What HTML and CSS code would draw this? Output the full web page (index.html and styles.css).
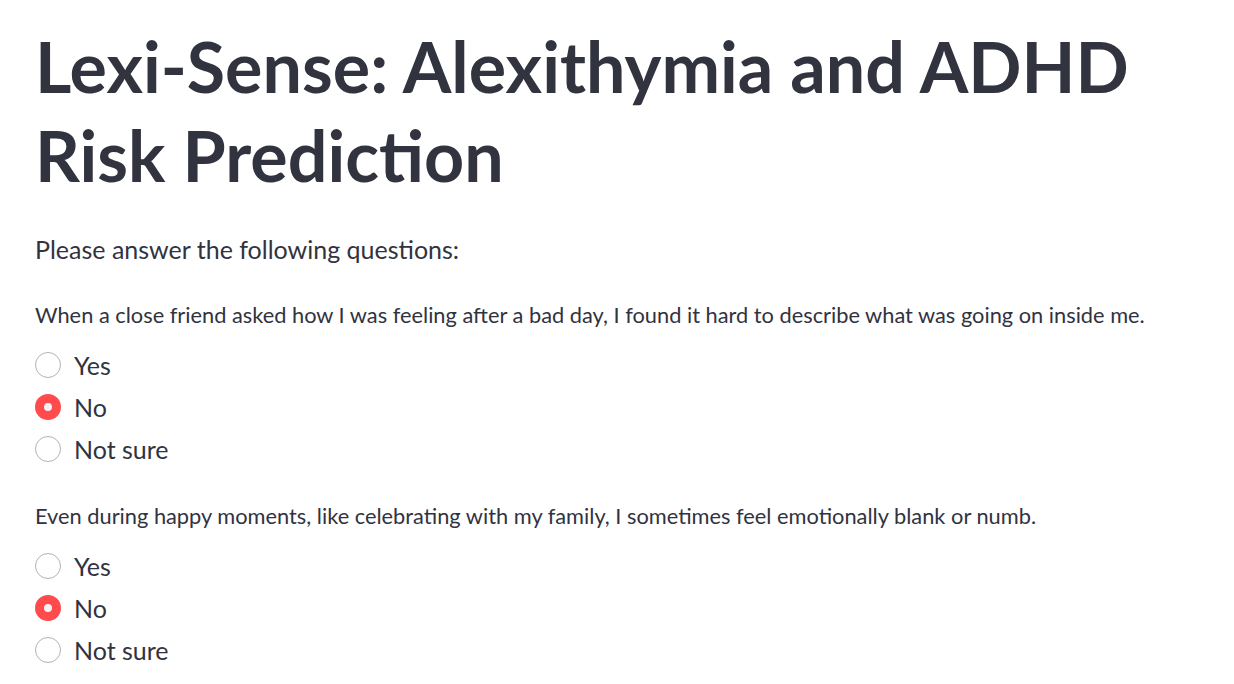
FILE: index.html
```html
<!DOCTYPE html>
<html>
<head>
<meta charset="utf-8">
<link rel="stylesheet" href="styles.css">
</head>
<body>
<main class="page">
  <h1 class="title">Lexi-Sense: Alexithymia and ADHD Risk Prediction</h1>
  <p class="intro">Please answer the following questions:</p>

  <section class="question">
    <p class="q-label">When a close friend asked how I was feeling after a bad day, I found it hard to describe what was going on inside me.</p>
    <div class="options">
      <label class="option"><span class="radio"></span><span class="opt-text">Yes</span></label>
      <label class="option"><span class="radio checked"></span><span class="opt-text">No</span></label>
      <label class="option"><span class="radio"></span><span class="opt-text">Not sure</span></label>
    </div>
  </section>

  <section class="question">
    <p class="q-label">Even during happy moments, like celebrating with my family, I sometimes feel emotionally blank or numb.</p>
    <div class="options">
      <label class="option"><span class="radio"></span><span class="opt-text">Yes</span></label>
      <label class="option"><span class="radio checked"></span><span class="opt-text">No</span></label>
      <label class="option"><span class="radio"></span><span class="opt-text">Not sure</span></label>
    </div>
  </section>
</main>
</body>
</html>
```

FILE: styles.css
```css
html, body {
  margin: 0;
  padding: 0;
  background: #ffffff;
}
body {
  font-family: "Lato", "Noto Sans", sans-serif;
  color: #31333f;
  overflow: hidden;
}
.page {
  padding: 22px 0 0 35px;
  display: flex;
  flex-direction: column;
}
.title {
  margin: 0;
  font-size: 70px;
  line-height: 89px;
  font-weight: 700;
  color: #31333f;
}
.intro {
  margin: 29px 0 0 0;
  font-size: 25px;
  line-height: 40px;
}
.question {
  margin-top: 28px;
}
.q-label {
  margin: 0;
  font-size: 21.8px;
  line-height: 36px;
}
.options {
  display: flex;
  flex-direction: column;
  margin-top: 11px;
}
.option {
  display: flex;
  align-items: center;
  height: 42px;
  gap: 13px;
}
.radio {
  box-sizing: border-box;
  width: 26px;
  height: 26px;
  border-radius: 50%;
  border: 1.8px solid #b3b3b6;
  background: #ffffff;
  flex: none;
}
.radio.checked {
  border: 9px solid #ff4b4b;
  background: #f0f2f6;
}
.opt-text {
  font-size: 25px;
  line-height: 36px;
}
```
